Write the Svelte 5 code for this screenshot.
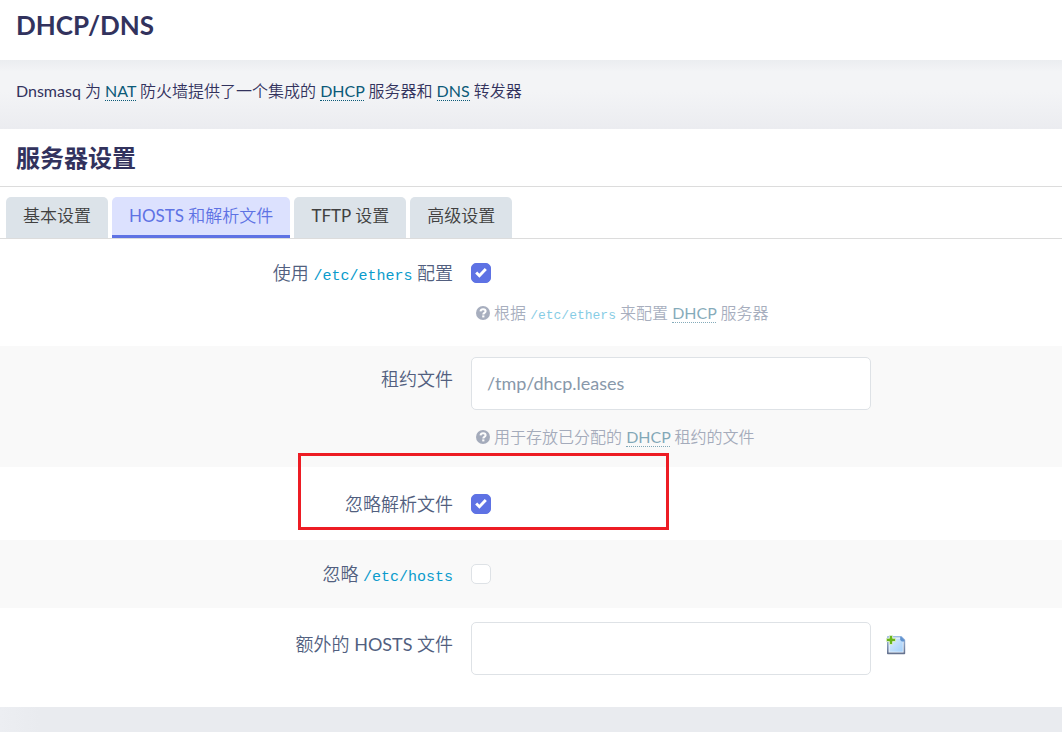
<script>
  let tab = $state(1);
  let ethers = $state(true);
  let lease = $state('');
  let noResolv = $state(true);
  let noHosts = $state(false);
  let extra = $state('');
  const tabs = ['基本设置', 'HOSTS 和解析文件', 'TFTP 设置', '高级设置'];
</script>

{#snippet question()}
  <svg class="question" viewBox="0 0 14 14" aria-hidden="true">
    <circle cx="7" cy="7" r="7" fill="currentColor" />
    <path d="M4.5 5.4C4.7 3.8 5.8 3.2 7.1 3.2c1.4 0 2.5.8 2.5 2 0 1.7-2.3 1.6-2.3 3.2" fill="none" stroke="#fff" stroke-width="2" />
    <path d="M6.2 9.4h2.2v2H6.2z" fill="#fff" />
  </svg>
{/snippet}

<header><h1>DHCP/DNS</h1></header>

<p class="intro">
  Dnsmasq 为 <abbr>NAT</abbr> 防火墙提供了一个集成的 <abbr>DHCP</abbr> 服务器和 <abbr>DNS</abbr> 转发器
</p>

<main>
  <h2>服务器设置</h2>
  <nav>
    {#each tabs as name, i}
      <button type="button" class:active={tab === i} onclick={() => (tab = i)}>{name}</button>
    {/each}
  </nav>

  <form>
    <div class="row">
      <label for="ethers">使用 <code>/etc/ethers</code> 配置</label>
      <div class="field">
        <input id="ethers" type="checkbox" bind:checked={ethers} />
        <p class="help">{@render question()}<span>根据 <code>/etc/ethers</code> 来配置 <abbr>DHCP</abbr> 服务器</span></p>
      </div>
    </div>

    <div class="row leases">
      <label for="lease">租约文件</label>
      <div class="field">
        <input id="lease" class="text" type="text" placeholder="/tmp/dhcp.leases" bind:value={lease} />
        <p class="help">{@render question()}<span>用于存放已分配的 <abbr>DHCP</abbr> 租约的文件</span></p>
      </div>
    </div>

    <div class="row resolv">
      <label for="resolv">忽略解析文件</label>
      <div class="field">
        <input id="resolv" type="checkbox" bind:checked={noResolv} />
        <div class="marker"></div>
      </div>
    </div>

    <div class="row hosts">
      <label for="hosts">忽略 <code>/etc/hosts</code></label>
      <div class="field"><input id="hosts" type="checkbox" bind:checked={noHosts} /></div>
    </div>

    <div class="row extra">
      <label for="extra">额外的 HOSTS 文件</label>
      <div class="field inline">
        <input id="extra" class="text" type="text" bind:value={extra} />
        <button type="button" class="add" aria-label="添加">
          <svg width="20" height="20" viewBox="0 0 20 20">
            <defs>
              <linearGradient id="sheet" x1="0" y1="0" x2="1" y2="1">
                <stop offset="0" stop-color="#dcecfc" />
                <stop offset="1" stop-color="#a3d0fb" />
              </linearGradient>
              <linearGradient id="edge" x1="0" y1="0" x2="0" y2="1">
                <stop offset="0" stop-color="#9dbce4" />
                <stop offset="1" stop-color="#66738f" />
              </linearGradient>
            </defs>
            <path d="M1.8 1.8h13.4l3.2 3.2v13.4H1.8z" fill="#f4f9ff" stroke="url(#edge)" stroke-width="1.6" stroke-linejoin="round" />
            <path d="M3.4 3.4h10.8l2.6 2.6v10.8H3.4z" fill="url(#sheet)" />
            <path d="M14.2 1.8h1l3.2 3.2v1.6h-2.6l-1.6-1.6z" fill="#5f92cf" />
            <path d="M3.4.4h3.2v2.9h3v3.2h-3v3H3.4v-3h-3V3.3h3z" fill="#69b51b" stroke="#e6f3dc" stroke-width=".8" />
          </svg>
        </button>
      </div>
    </div>
  </form>
</main>
<footer></footer>

<style>
  :global(body) {
    margin: 0;
    background: #fff;
    color: #32325d;
    font-family: Lato, "Noto Sans CJK SC DemiLight", "Noto Sans CJK SC", sans-serif;
    font-size: 16px;
    line-height: 24px;
  }
  h1, h2, p { margin: 0; }
  header { height: 60px; box-sizing: border-box; padding: 7px 16px; }
  h1 { font-size: 26px; line-height: 36px; font-weight: 700; }
  .intro {
    padding: 19px 16px 26px;
    background: linear-gradient(#ebedf0, #f3f4f6 12px, #f3f4f6 32px, #ebecf0);
  }
  abbr { color: #0b5a78; border-bottom: 1px dotted currentColor; }
  h2 {
    padding: 11px 16px;
    border-bottom: 1px solid #dcdcdc;
    font-family: Lato, "Noto Sans CJK SC", sans-serif;
    font-size: 24px;
    line-height: 35px;
    font-weight: 700;
  }
  nav {
    display: flex;
    gap: 4px;
    padding: 10px 6px 0;
    border-bottom: 1px solid #dcdcdc;
  }
  nav button {
    height: 41px;
    padding: 0 17px 1px;
    border: 0;
    border-bottom: 3px solid #dce3e9;
    border-radius: 5px 5px 0 0;
    background: #dce3e9;
    color: #404040;
    font-family: inherit;
    font-size: 17px;
    line-height: 36px;
    white-space: nowrap;
  }
  nav button.active {
    border-bottom-color: #5e72e4;
    background: #dce1fe;
    color: #5e72e4;
  }
  .row {
    display: grid;
    grid-template-columns: 23fr 30fr;
    column-gap: 18px;
    padding: 22px 0 20px;
  }
  .row:nth-child(even) { background: #f9f9f9; }
  label { color: #525f7f; font-size: 18px; line-height: 24px; text-align: right; }
  code { color: #0a9bcc; font-family: "Liberation Mono", monospace; font-size: 13px; line-height: 1; }
  label code { font-size: 15px; }
  .field { position: relative; }
  input[type="checkbox"] {
    appearance: none;
    display: block;
    width: 20px;
    height: 20px;
    margin: 2px 0;
    border: 1px solid #dee2e6;
    border-radius: 5px;
    background: #fff;
  }
  input[type="checkbox"]:checked {
    border-color: #5e72e4;
    background: #5e72e4 url("data:image/svg+xml,%3Csvg xmlns='http://www.w3.org/2000/svg' viewBox='0 0 18 18'%3E%3Cpath d='M4.2 8.5l3.2 3.2 6.4-6.8' fill='none' stroke='%23fff' stroke-width='2.9'/%3E%3C/svg%3E") center / 18px 18px;
  }
  .text {
    box-sizing: border-box;
    width: 400px;
    max-width: 100%;
    height: 53px;
    padding: 0 15px 2px;
    border: 1px solid #dee2e6;
    border-radius: 5px;
    background: #fff;
    color: #525f7f;
    font-family: inherit;
    font-size: 18px;
    line-height: 24px;
  }
  .text::placeholder { color: #8898aa; opacity: 1; }
  .help {
    display: flex;
    align-items: center;
    gap: 4px;
    padding: 15px 0 0 5px;
    color: #525f7f;
    opacity: .5;
  }
  .question { width: 14px; height: 14px; }
  .row:first-child .help { padding: 16px 0 1px 5px; }
  .leases { padding: 11px 0 18px; }
  .leases .text { display: block; }
  .leases label { padding-top: 10px; }
  .resolv { padding: 25px 0 24px; }
  .hosts { padding: 22px 0; }
  .extra { padding: 14px 0 32px; }
  .extra label { padding-top: 10px; }
  .inline { display: flex; align-items: center; gap: 15px; }
  .add { display: flex; padding: 0 0 7px; border: 0; background: none; }
  .marker {
    position: absolute;
    top: -39px;
    left: -173px;
    box-sizing: border-box;
    width: 371px;
    height: 77px;
    border: 3px solid #ed1c24;
    pointer-events: none;
  }
  footer { height: 25px; background: linear-gradient(90deg, #eceef2, #e9ebef 40px); }
</style>
